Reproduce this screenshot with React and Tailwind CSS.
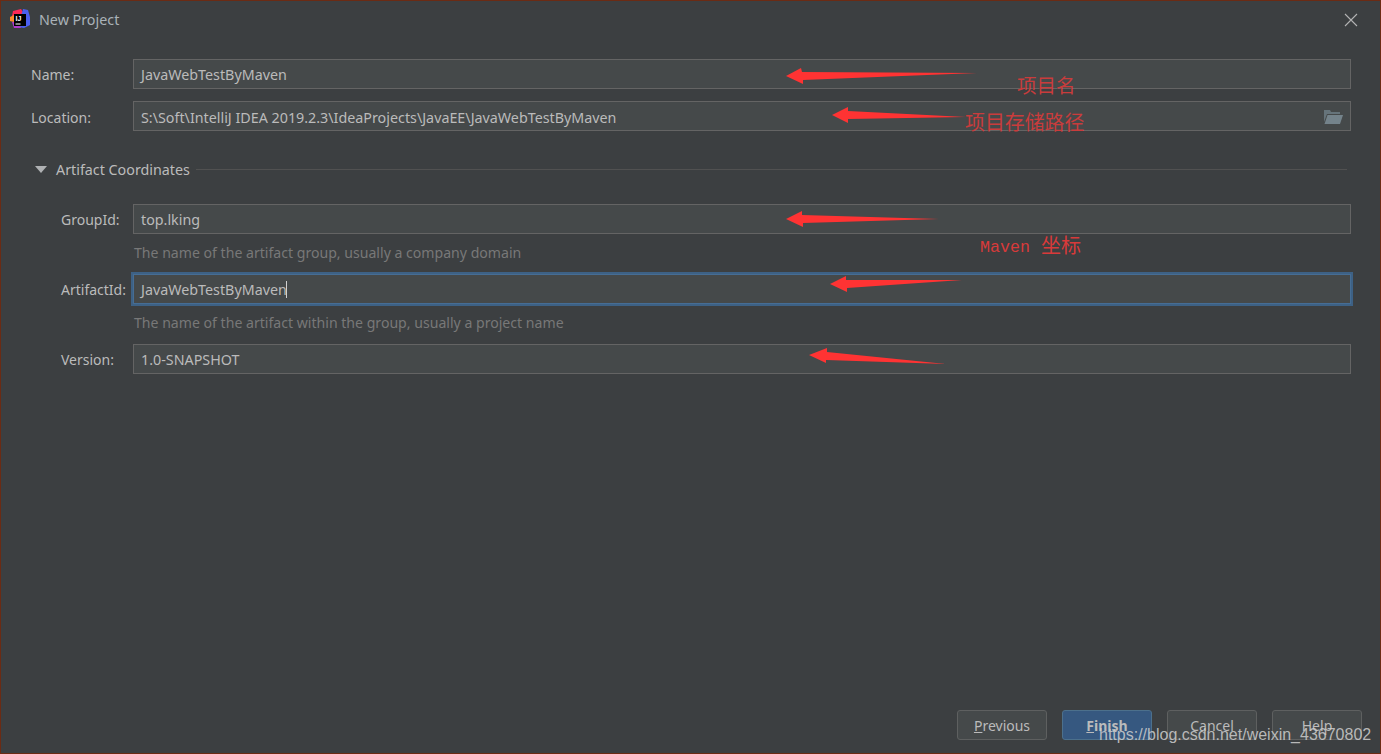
const Field = ({ value, focused, caret, children }) => (
  <div
    className={
      "flex-1 h-[30px] flex items-center pl-[7px] pr-[7px] bg-[#45494a] border " +
      (focused
        ? "border-[#466d94] ring-2 ring-[#3d6185]"
        : "border-[#646464]")
    }
  >
    <span className="text-[#bbbbbb] pt-[2px]">{value}</span>
    {caret && <span className="w-px h-[17px] bg-[#d0d0d0] -ml-px"></span>}
    {children}
  </div>
);

const Row = ({ label, labelWidth, ...rest }) => (
  <div className="flex items-center">
    <label className={"text-[#bbbbbb] text-[14px] " + labelWidth}>{label}</label>
    <Field {...rest} />
  </div>
);

const Hint = ({ children }) => (
  <div className="h-[40px] pl-[73px] pt-[9px] leading-[20px] text-[14.1px] text-[#787878]">
    {children}
  </div>
);

const Button = ({ hot, rest, primary, bold, plain }) => (
  <button
    className={
      "w-[90px] h-[30px] rounded-[3px] border text-[14px] text-[#bbbbbb] " +
      (primary
        ? "bg-[#365880] border-[#4c708c] "
        : "bg-[#45494a] border-[#5e6060] ") +
      (bold ? "font-bold" : "")
    }
  >
    <span className={plain ? "" : "underline"}>{hot}</span>
    {rest}
  </button>
);

const Logo = () => (
  <svg width="22" height="22" viewBox="0 0 22 22" className="ml-[9px] -mt-[3px] shrink-0">
    <polygon points="3,4 11,2 14,7 6,12 2,9" fill="#fe2857" />
    <polygon points="13,2 18,3 20,10 20,18 14,21 8,20" fill="#4b5ff0" />
    <polygon points="0,10 4,8 4,15 0,14" fill="#fd8a2b" />
    <polygon points="2,15 8,15 11,21 4,21" fill="#b03ad0" />
    <rect x="4" y="7" width="12" height="12" fill="#000000" />
    <rect x="5.5" y="16.5" width="5" height="1" fill="#ffffff" />
    <text x="5.5" y="14" fontSize="7" fontWeight="700" fill="#ffffff" fontFamily="'Liberation Sans', sans-serif">IJ</text>
  </svg>
);

const FolderOpen = () => (
  <svg width="20" height="16" viewBox="0 0 20 16" className="ml-auto -mr-[1px] mt-px shrink-0">
    <path d="M0 1 H6 L7 3 H16 V5 H3 L0 13 Z" fill="#66747b" />
    <path d="M3.5 6 H19 L16 15 H0.5 Z" fill="#74838b" />
  </svg>
);

const App = () => {
  return (
    <div className="relative box-border w-[1381px] h-[754px] overflow-hidden flex flex-col bg-[#3c3f41] border border-[#6b2b14] text-[14.3px] font-['Noto_Sans',sans-serif]">
      <div className="h-[37px] flex items-center shrink-0">
        <Logo />
        <span className="ml-[7px] text-[#aab2b8]">New Project</span>
        <svg width="14" height="14" viewBox="0 0 14 14" className="ml-auto mr-[22px]">
          <path d="M1 1 L13 13 M13 1 L1 13" stroke="#b4b4b4" strokeWidth="1.1" fill="none" />
        </svg>
      </div>

      <div className="flex flex-col flex-1 pt-[21px] pl-[30px] pr-[29px]">
        <div className="flex flex-col gap-[12px]">
          <Row label="Name:" labelWidth="w-[102px]" value="JavaWebTestByMaven" />
          <div className="[&_label]:pt-[2px] [&_span]:pt-[4px]">
            <Row
              label="Location:"
              labelWidth="w-[102px]"
              value="S:\Soft\IntelliJ IDEA 2019.2.3\IdeaProjects\JavaEE\JavaWebTestByMaven"
            >
              <FolderOpen />
            </Row>
          </div>
        </div>

        <div className="flex items-center h-[20px] mt-[28px] mb-[25px] pr-[4px]">
          <span className="ml-[4px] w-0 h-0 border-x-[6px] border-x-transparent border-t-[7px] border-t-[#afb1b3]"></span>
          <span className="ml-[9px] pt-[2px] text-[#bbbbbb]">Artifact Coordinates</span>
          <span className="flex-1 h-px bg-[#515151] ml-[6px]"></span>
        </div>

        <div className="pl-[30px] flex flex-col">
          <Row label="GroupId:" labelWidth="w-[72px]" value="top.lking" />
          <Hint>The name of the artifact group, usually a company domain</Hint>
          <Row label="ArtifactId:" labelWidth="w-[72px]" value="JavaWebTestByMaven" focused caret />
          <Hint>The name of the artifact within the group, usually a project name</Hint>
          <Row label="Version:" labelWidth="w-[72px]" value="1.0-SNAPSHOT" />
        </div>
      </div>

      <div className="flex justify-end gap-[15px] pr-[18px] pb-[13px]">
        <Button hot="P" rest="revious" />
        <Button hot="F" rest="inish" primary bold />
        <Button hot="Cancel" plain />
        <Button hot="Help" plain />
      </div>

      {/* red notes pasted over the screenshot */}
      <svg width="1381" height="754" className="absolute -top-px -left-px pointer-events-none">
        <g fill="#ff3333">
          <polygon points="786,76 801,68 802,72 977,73 803,80 803,84" />
          <polygon points="832,115 848,107 848,111 966,117 848,119 848,123" />
          <polygon points="786,219 802,211 802,215 939,219 803,223 803,227" />
          <polygon points="830,284 846,276 846,280 962,280 847,288 847,292" />
          <polygon points="809,355 827,348 827,352 946,364 826,360 826,363" />
        </g>
      </svg>
      <span className="absolute left-[1016px] top-[71px] text-[19.5px] leading-[26px] text-[#c93c3c] font-['Noto_Sans_CJK_SC',sans-serif]">项目名</span>
      <span className="absolute left-[964px] top-[108px] text-[19.9px] leading-[26px] text-[#c93c3c] font-['Noto_Sans_CJK_SC',sans-serif]">项目存储路径</span>
      <span className="absolute left-[979px] top-[233px] leading-[26px] text-[#d83a3a] font-['Liberation_Mono','Noto_Sans_CJK_SC',monospace] text-[16.67px] whitespace-pre">
        Maven <span className="text-[20px] relative top-px left-px">坐标</span>
      </span>

      <span className="absolute left-[1098px] top-[724px] text-[16px] leading-[20px] text-[#cfcfcf]/85 font-['Liberation_Sans',sans-serif]">
        https://blog.csdn.net/weixin_43670802
      </span>
    </div>
  );
};

export default App;
